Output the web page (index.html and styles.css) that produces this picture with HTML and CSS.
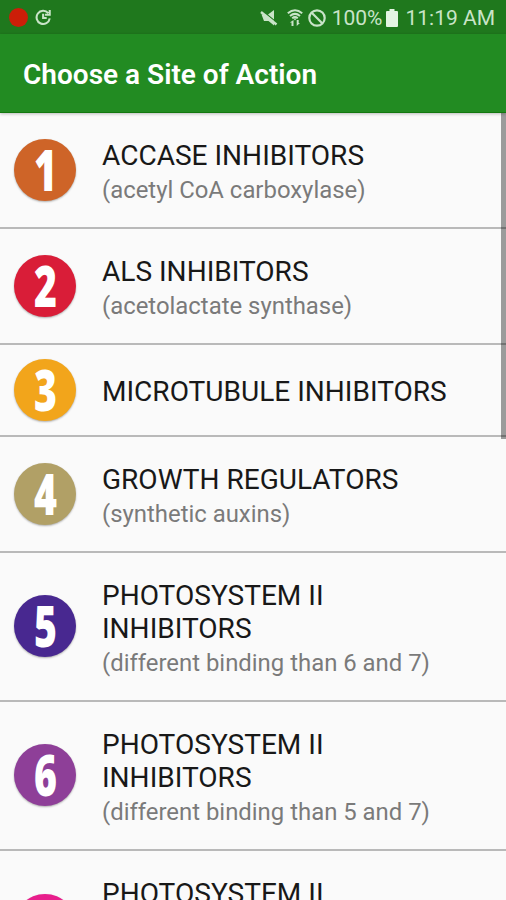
FILE: index.html
```html
<!DOCTYPE html>
<html lang="en">
<head>
<meta charset="utf-8">
<title>Choose a Site of Action</title>
<link rel="stylesheet" href="styles.css">
</head>
<body>
<div class="status">
  <span class="rec"></span>
  <svg class="sync" viewBox="0 0 18 18"><path d="M14 4.300A7 7 0 1 0 15.600 10M15.600 1v5h-5M8.600 5v4.600h3.800" fill="none" stroke="currentColor" stroke-width="2.200"/></svg>
  <span class="spacer"></span>
  <svg class="mute" viewBox="0 0 18 16"><path d="M1.500 4.500H6L14 11V15.500L8.500 11H4zM8 4.500 14 0v9.500z" fill="currentColor"/><path d="M1 2 16.500 14.500" stroke="currentColor" stroke-width="2.400"/></svg>
  <svg class="wifi" viewBox="0 0 16 18"><g fill="none" stroke="currentColor" stroke-width="2"><path d="M.8 4.200Q8-1.700 15.200 4.200M3 6.900Q8 2.800 13 6.900M5.200 9.200Q8 7 10.800 9.200"/></g><path d="M6.500 9.500h3L8 11.500zM2.800 13.500 6.500 11v6H4.500v-3.500zM13 14 9.700 17v-6h2v3z" fill="currentColor"/></svg>
  <svg class="ban" viewBox="0 0 18 18"><g fill="none" stroke="currentColor" stroke-width="2.200"><circle cx="9" cy="9" r="7.700"/><path d="M3.500 3.500l11 11"/></g></svg>
  <span class="pct">100%</span>
  <svg class="batt" viewBox="0 0 12 18"><path d="M3.500 0h5v2H11q1 0 1 1v14q0 1-1 1H1q-1 0-1-1V3q0-1 1-1h2.500z" fill="currentColor"/></svg>
  <span class="time">11:19 AM</span>
</div>
<header class="bar"><h1>Choose a Site of Action</h1></header>
<main class="list">
  <div class="row"><span class="badge c1"><b>1</b></span><div class="text"><p class="name">ACCASE INHIBITORS</p><p class="sub">(acetyl CoA carboxylase)</p></div></div>
  <div class="row"><span class="badge c2"><b>2</b></span><div class="text"><p class="name">ALS INHIBITORS</p><p class="sub">(acetolactate synthase)</p></div></div>
  <div class="row single"><span class="badge c3"><b>3</b></span><div class="text"><p class="name">MICROTUBULE INHIBITORS</p></div></div>
  <div class="row"><span class="badge c4"><b>4</b></span><div class="text"><p class="name">GROWTH REGULATORS</p><p class="sub">(synthetic auxins)</p></div></div>
  <div class="row tall"><span class="badge c5"><b>5</b></span><div class="text"><p class="name">PHOTOSYSTEM II<br>INHIBITORS</p><p class="sub">(different binding than 6 and 7)</p></div></div>
  <div class="row tall"><span class="badge c6"><b>6</b></span><div class="text"><p class="name">PHOTOSYSTEM II<br>INHIBITORS</p><p class="sub">(different binding than 5 and 7)</p></div></div>
  <div class="row tall last"><span class="badge c7"></span><div class="text"><p class="name">PHOTOSYSTEM II</p></div></div>
  <span class="scroll"></span>
</main>
</body>
</html>
```
FILE: styles.css
```css
* { box-sizing: border-box; margin: 0; padding: 0; }
body {
  width: 506px;
  height: 900px;
  overflow: hidden;
  display: flex;
  flex-direction: column;
  background: #fafafa;
  font-family: Roboto, "Liberation Sans", sans-serif;
}
.status {
  height: 34px;
  flex: none;
  display: flex;
  align-items: center;
  padding: 1px 11px 0 9px;
  background: #1f781d;
  color: #c9e4c8;
  font-size: 21px;
}
.rec { width: 19px; height: 19px; border-radius: 50%; background: #cc1e08; }
.sync { width: 17px; height: 17px; margin-left: 7px; }
.spacer { flex: 1; }
.mute { width: 18px; height: 16px; margin-right: 9px; }
.wifi { width: 16px; height: 18px; margin-right: 5px; }
.ban { width: 18px; height: 18px; margin-right: 6px; }
.batt { width: 12px; height: 18px; margin: 0 7px 0 4px; color: #e4f5e3; }
.bar {
  height: 79px;
  flex: none;
  display: flex;
  align-items: center;
  padding: 3px 23px 0;
  background: #228b22;
  border-bottom: 1px solid #13780f;
  box-shadow: 0 1px 3px rgba(0, 0, 0, .25);
  z-index: 1;
}
h1 {
  font-size: 28px;
  font-weight: 600;
  line-height: 34px;
  color: #fff;
  white-space: nowrap;
}
.list { position: relative; flex: 1; overflow: hidden; }
.row {
  height: 116px;
  display: flex;
  align-items: center;
  padding: 1px 0 0 14.300px;
  border-bottom: 2px solid #b9b9b9;
}
.single { height: 91.500px; }
.tall { height: 149px; }
.badge {
  width: 62px;
  height: 62px;
  flex: none;
  margin-bottom: 1px;
  border-radius: 50%;
  display: flex;
  align-items: center;
  justify-content: center;
  box-shadow: 0 1px 2px rgba(0, 0, 0, .3);
}
.badge b {
  font: 800 56px/60px "Open Sans", sans-serif;
  height: 62px;
  color: #fff;
  transform: scaleX(.7);
}
.c1 { background: #ce6428; }
.c2 { background: #d91d38; }
.c3 { background: #f2a51b; }
.c4 { background: #b1a066; }
.c5 { background: #482890; }
.c6 { background: #8e3f98; }
.c7 { background: #e81e8c; }
.text { margin-left: 25.700px; white-space: nowrap; }
.name { font-size: 28.050px; line-height: 33px; color: #181818; }
.sub {
  margin: 4px 0 -3px;
  font-size: 23.900px;
  line-height: 29px;
  color: #7a7a7a;
}
.single .name { padding-top: 2px; }
.last { align-items: flex-start; }
.last .badge { margin-top: 42px; }
.last .text { padding-top: 25px; }
.scroll { position: absolute; top: 0; right: 0; width: 5px; height: 326px; background: rgba(0, 0, 0, .38); }
```
